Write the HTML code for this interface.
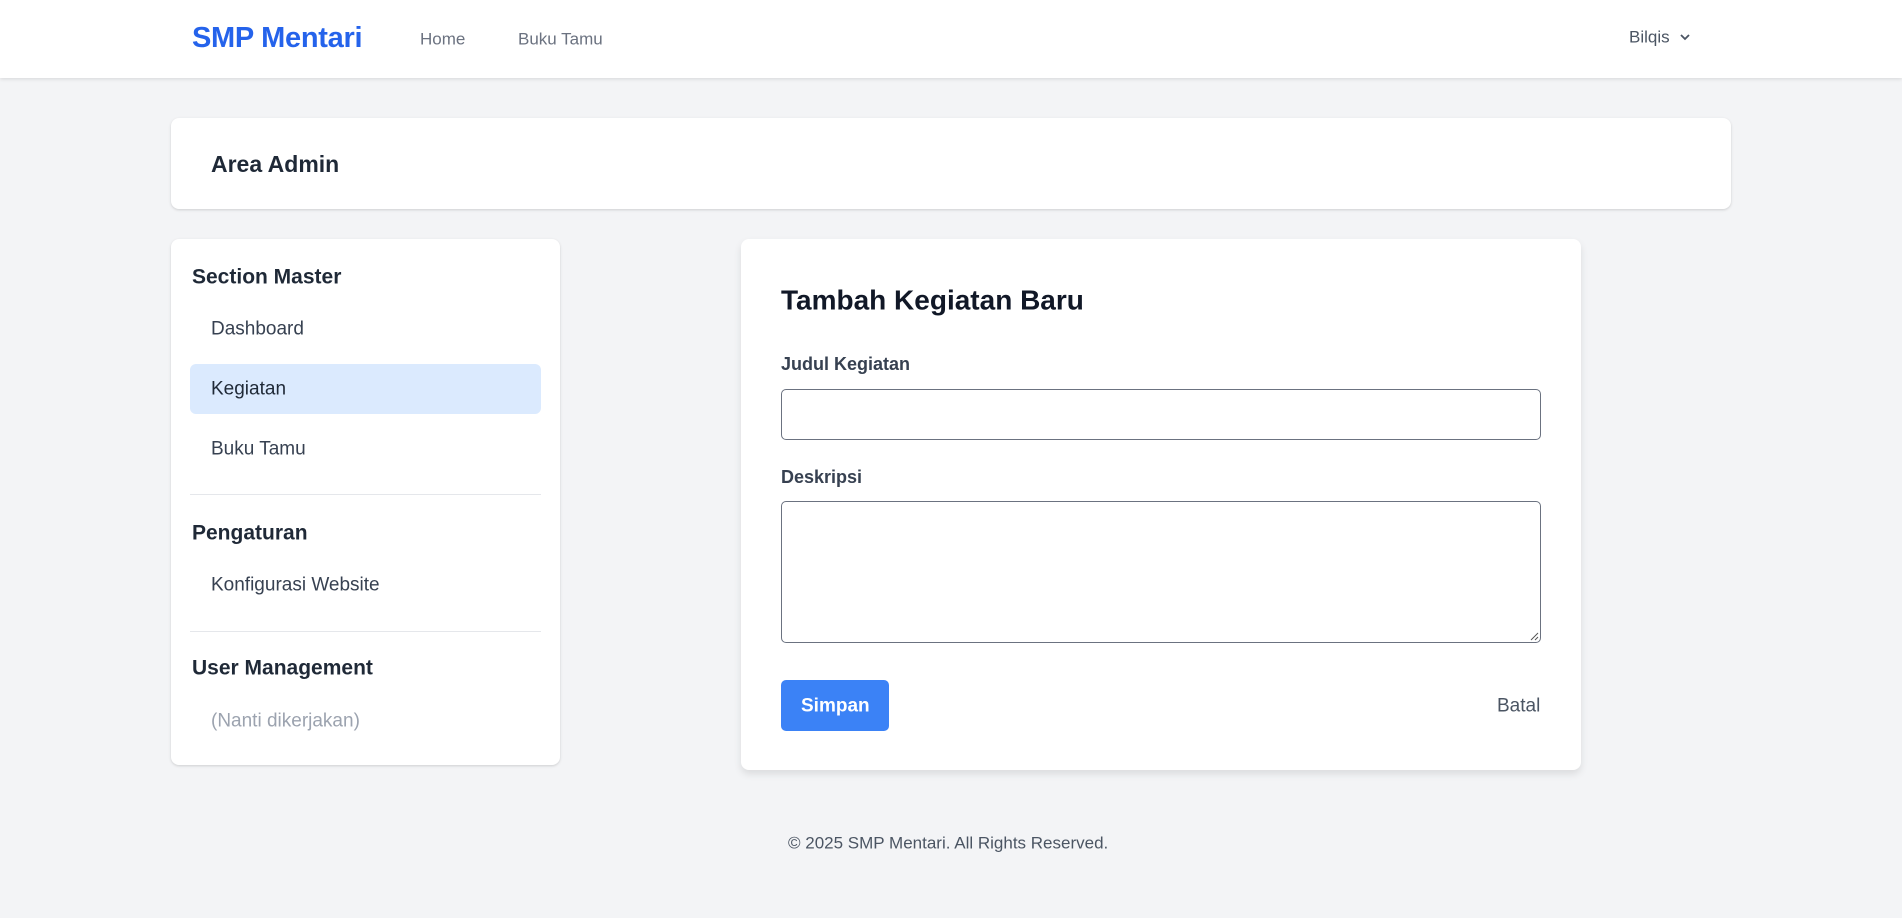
<!DOCTYPE html>
<html><head><style>
*{box-sizing:border-box;margin:0;padding:0}
body{width:1902px;height:918px;background:#f3f4f6;font-family:"Liberation Sans",sans-serif;position:relative;overflow:hidden;color:#1f2937}
.abs{position:absolute}
.nav{left:0;top:0;width:1902px;height:78px;background:#fff;box-shadow:0 1px 4px rgba(0,0,0,.12)}
.card{background:#fff;border-radius:8px;box-shadow:0 1px 3px rgba(0,0,0,.1),0 1px 2px rgba(0,0,0,.06)}
.t{position:absolute;white-space:nowrap;transform:translateY(-48%)}
.b{font-weight:bold}
</style></head><body>
<div class="abs nav"></div>
<div class="t" style="left:192px;top:38px;font-size:29px;color:#2563eb;font-weight:bold;letter-spacing:-0.3px">SMP Mentari</div>
<div class="t" style="left:420px;top:39px;font-size:17px;color:#6b7280">Home</div>
<div class="t" style="left:518px;top:39px;font-size:17px;color:#6b7280">Buku Tamu</div>
<div class="t" style="left:1629px;top:37px;font-size:17px;color:#4b5563">Bilqis</div>
<svg class="abs" style="left:1679px;top:32px" width="12" height="10" viewBox="0 0 12 10"><path d="M2 3l4 4 4-4" fill="none" stroke="#4b5563" stroke-width="1.8"/></svg>

<div class="abs card" style="left:171px;top:118px;width:1560px;height:91px"></div>
<div class="t b" style="left:211px;top:164px;font-size:23px;color:#1f2937">Area Admin</div>

<div class="abs card" style="left:171px;top:239px;width:389px;height:526px"></div>
<div class="t b" style="left:192px;top:277px;font-size:21px;color:#1f2937">Section Master</div>
<div class="t" style="left:211px;top:329px;font-size:19px;color:#374151">Dashboard</div>
<div class="abs" style="left:190px;top:364px;width:351px;height:50px;background:#dbeafe;border-radius:6px"></div>
<div class="t" style="left:211px;top:389px;font-size:19px;color:#1f2937">Kegiatan</div>
<div class="t" style="left:211px;top:449px;font-size:19px;color:#374151">Buku Tamu</div>
<div class="abs" style="left:190px;top:494px;width:351px;height:1px;background:#e5e7eb"></div>
<div class="t b" style="left:192px;top:533px;font-size:21px;color:#1f2937">Pengaturan</div>
<div class="t" style="left:211px;top:585px;font-size:19px;color:#374151">Konfigurasi Website</div>
<div class="abs" style="left:190px;top:631px;width:351px;height:1px;background:#e5e7eb"></div>
<div class="t b" style="left:192px;top:668px;font-size:21px;color:#1f2937">User Management</div>
<div class="t" style="left:211px;top:721px;font-size:19px;color:#9ca3af">(Nanti dikerjakan)</div>

<div class="abs card" style="left:741px;top:239px;width:840px;height:531px;box-shadow:0 4px 8px rgba(0,0,0,.1)"></div>
<div class="t b" style="left:781px;top:300px;font-size:28px;color:#111827">Tambah Kegiatan Baru</div>
<div class="t b" style="left:781px;top:364px;font-size:18px;color:#374151">Judul Kegiatan</div>
<div class="abs" style="left:781px;top:389px;width:760px;height:51px;border:1px solid #6b7280;border-radius:5px;background:#fff"></div>
<div class="t b" style="left:781px;top:477px;font-size:18px;color:#374151">Deskripsi</div>
<div class="abs" style="left:781px;top:501px;width:760px;height:142px;border:1px solid #6b7280;border-radius:5px;background:#fff"></div>
<svg class="abs" style="left:1530px;top:632px" width="9" height="9" viewBox="0 0 9 9"><path d="M1 8L8 1M5 8L8 5" stroke="#555" stroke-width="1"/></svg>
<div class="abs" style="left:781px;top:680px;width:108px;height:51px;background:#3b82f6;border-radius:5px"></div>
<div class="t b" style="left:801px;top:706px;font-size:19px;color:#fff">Simpan</div>
<div class="t" style="left:1497px;top:706px;font-size:19px;color:#4b5563">Batal</div>

<div class="t" style="left:788px;top:843px;font-size:17px;color:#4b5563">© 2025 SMP Mentari. All Rights Reserved.</div>
</body></html>
